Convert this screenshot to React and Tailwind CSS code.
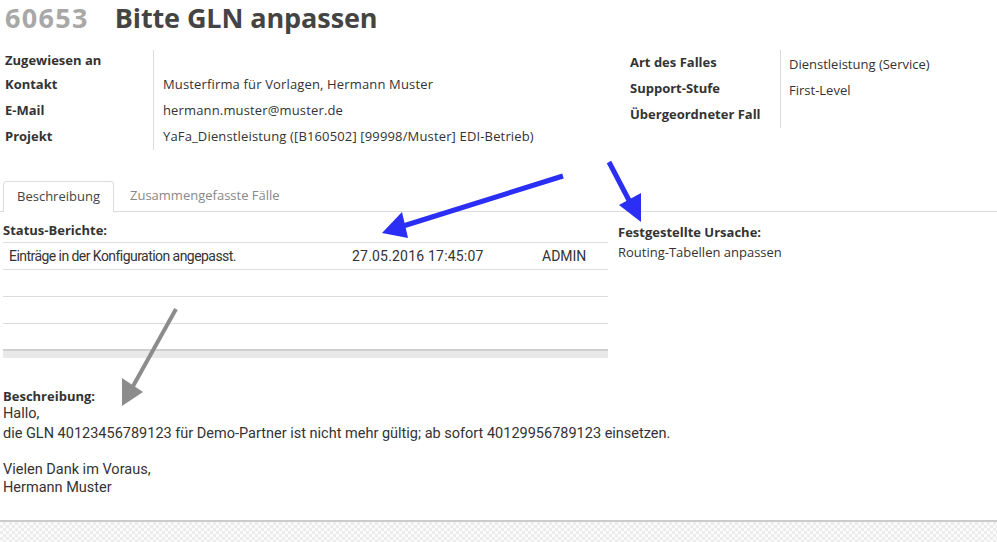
import React from "react";

const topFont = { fontFamily: '"Open Sans", "Noto Sans", sans-serif' };
const bodyFont = { fontFamily: 'Roboto, "Liberation Sans", sans-serif' };

const leftRows = [
  { label: "Zugewiesen an", value: "", h: "h-[22px]" },
  { label: "Kontakt", value: "Musterfirma für Vorlagen, Hermann Muster", h: "h-[26px]" },
  { label: "E-Mail", value: "hermann.muster@muster.de", h: "h-[26px]" },
  { label: "Projekt", value: "YaFa_Dienstleistung ([B160502] [99998/Muster] EDI-Betrieb)", h: "h-[26px]" },
];

const rightRows = [
  { label: "Art des Falles", value: "Dienstleistung (Service)" },
  { label: "Support-Stufe", value: "First-Level" },
  { label: "Übergeordneter Fall", value: "" },
];

const Arrows = () => (
  <svg className="absolute inset-0 pointer-events-none" width="997" height="542" viewBox="0 0 997 542">
    {/* blue arrow to status table */}
    <line x1="563" y1="176" x2="400" y2="227" stroke="#2b2ff5" strokeWidth="5" />
    <polygon points="382,233 402,212 408,238" fill="#2b2ff5" />
    {/* blue arrow to Festgestellte Ursache */}
    <line x1="609" y1="162" x2="633" y2="208" stroke="#2b2ff5" strokeWidth="5" />
    <polygon points="641,222 619,205 641,193" fill="#2b2ff5" />
    {/* gray arrow to Beschreibung */}
    <line x1="176" y1="309" x2="132" y2="388" stroke="#8c8c8c" strokeWidth="4" />
    <polygon points="122,406 122,378 143,392" fill="#8c8c8c" />
  </svg>
);

export default function App() {
  return (
    <div className="relative w-[997px] h-[542px] bg-white text-[#333] overflow-hidden" style={topFont}>
      {/* Title */}
      <h1 className="h-[35px] pl-[5px] text-[27px] leading-[35px] font-bold">
        <span className="text-[#a8a8a8] tracking-[1.3px]">60653</span>
        <span className="ml-[26px] text-[#444] tracking-[-0.1px]">Bitte GLN anpassen</span>
      </h1>

      {/* Info blocks */}
      <div className="flex mt-[15px] h-[100px] text-[13px]">
        <div className="flex w-[625px]">
          <div className="w-[153px] pl-[5px] font-bold">
            {leftRows.map((r) => (
              <div key={r.label} className={`${r.h} flex items-center`}>{r.label}</div>
            ))}
          </div>
          <div className="border-l border-[#dcdcdc] pl-[9px] tracking-[0.15px]">
            {leftRows.map((r) => (
              <div key={r.label} className={`${r.h} flex items-center`}>{r.value}</div>
            ))}
          </div>
        </div>
        <div className="flex h-[78px]">
          <div className="w-[155px] pl-[5px] font-bold">
            {rightRows.map((r) => (
              <div key={r.label} className="h-[26px] flex items-center">{r.label}</div>
            ))}
          </div>
          <div className="border-l border-[#dcdcdc] pl-[8px]">
            {rightRows.map((r) => (
              <div key={r.label} className="h-[26px] flex items-center pt-[3px]">{r.value}</div>
            ))}
          </div>
        </div>
      </div>

      {/* Tabs */}
      <div className="mt-[31px] flex items-end border-b border-[#dcdcdc] h-[31px] pl-[3px] text-[13px]">
        <div className="h-[31px] w-[111px] -mb-px border border-b-0 border-[#dcdcdc] rounded-t-[4px] bg-white flex items-center justify-center text-[#444]">
          Beschreibung
        </div>
        <div className="h-[30px] ml-[16px] flex items-center text-[#888]">Zusammengefasste Fälle</div>
      </div>

      {/* Content */}
      <div className="flex" style={bodyFont}>
        <div className="w-[605px] ml-[3px] shrink-0">
          <div className="h-[30px] pt-[9px] font-bold text-[13px] leading-[18px]" style={topFont}>Status-Berichte:</div>
          <div className="border-t border-[#dcdcdc]">
            <div className="h-[27px] flex items-center border-b border-[#dcdcdc] text-[14px]">
              <span className="w-[349px] pl-[6px] tracking-[-0.55px]">Einträge in der Konfiguration angepasst.</span>
              <span className="w-[190px] tracking-[0.2px]">27.05.2016 17:45:07</span>
              <span>ADMIN</span>
            </div>
            <div className="h-[27px] border-b border-[#dcdcdc]" />
            <div className="h-[27px] border-b border-[#dcdcdc]" />
            <div className="h-[25px]" />
            <div className="h-[9px] bg-[#e9e9e9] border-t-2 border-[#cfcfcf]" />
          </div>

          <div className="mt-[29px] leading-[18px] text-[14.5px] whitespace-nowrap">
            <div className="font-bold text-[13px]" style={topFont}>Beschreibung:</div>
            <div>Hallo,</div>
            <div className="mt-[2px]">die GLN 40123456789123 für Demo-Partner ist nicht mehr gültig; ab sofort 40129956789123 einsetzen.</div>
            <div className="h-[18px]" />
            <div>Vielen Dank im Voraus,</div>
            <div>Hermann Muster</div>
          </div>
        </div>
        <div className="ml-[10px] pt-[10px] leading-[20px] text-[13px]" style={topFont}>
          <div className="font-bold">Festgestellte Ursache:</div>
          <div>Routing-Tabellen anpassen</div>
        </div>
      </div>

      {/* Bottom pattern */}
      <div className="absolute left-0 right-0 top-[520px] h-[22px] border-t-2 border-[#cccccc] bg-[repeating-conic-gradient(#ececec_0_25%,#fbfbfb_0_50%)] bg-[length:6px_6px]" />

      <Arrows />
    </div>
  );
}
